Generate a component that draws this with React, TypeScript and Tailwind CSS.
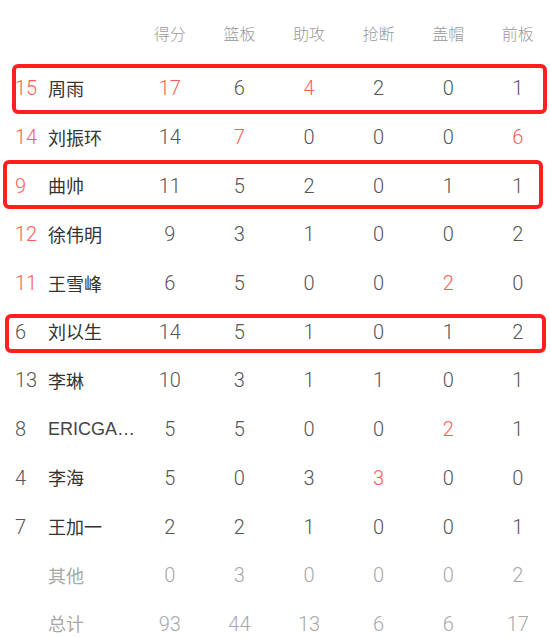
import React from "react";

type Row = { no: string; noRed?: boolean; name: string; vals: (number)[]; red?: number[]; muted?: boolean };

const rows: Row[] = [
  { no: "15", noRed: true, name: "周雨", vals: [17, 6, 4, 2, 0, 1], red: [0, 2] },
  { no: "14", noRed: true, name: "刘振环", vals: [14, 7, 0, 0, 0, 6], red: [1, 5] },
  { no: "9", noRed: true, name: "曲帅", vals: [11, 5, 2, 0, 1, 1] },
  { no: "12", noRed: true, name: "徐伟明", vals: [9, 3, 1, 0, 0, 2] },
  { no: "11", noRed: true, name: "王雪峰", vals: [6, 5, 0, 0, 2, 0], red: [4] },
  { no: "6", name: "刘以生", vals: [14, 5, 1, 0, 1, 2] },
  { no: "13", name: "李琳", vals: [10, 3, 1, 1, 0, 1] },
  { no: "8", name: "ERICGA…", vals: [5, 5, 0, 0, 2, 1], red: [4] },
  { no: "4", name: "李海", vals: [5, 0, 3, 3, 0, 0], red: [3] },
  { no: "7", name: "王加一", vals: [2, 2, 1, 0, 0, 1] },
  { no: "", name: "其他", vals: [0, 3, 0, 0, 0, 2], muted: true },
  { no: "", name: "总计", vals: [93, 44, 13, 6, 6, 17], muted: true },
];

const headers = ["得分", "篮板", "助攻", "抢断", "盖帽", "前板"];

const font = { fontFamily: '"Helvetica Neue", Roboto, "Noto Sans CJK SC", sans-serif' };

export default function App() {
  return (
    <div className="relative w-[550px] h-[637px] overflow-hidden bg-white" style={font}>
      <div className="grid grid-cols-[33px_87px_repeat(6,69.6px)] pl-[15px] h-[64px] items-center pt-[2px]">
        <div />
        <div />
        {headers.map((h) => (
          <div key={h} className="text-center text-[16px] text-[#9a9a9a] font-light" style={{ fontFamily: '"Noto Sans CJK SC", sans-serif' }}>
            {h}
          </div>
        ))}
      </div>
      {rows.map((r, i) => {
        const isLatin = r.name.startsWith("ERIC");
        return (
          <div key={i} className="grid grid-cols-[33px_87px_repeat(6,69.6px)] pl-[15px] h-[48.7px] items-center">
            <div className={`text-[20px] font-light ${r.noRed ? "text-[#ff5e55]" : "text-[#555555]"}`} style={{ fontFamily: 'Roboto, sans-serif' }}>
              {r.no}
            </div>
            <div
              className={`whitespace-nowrap ${isLatin ? "text-[18px] text-[#444444]" : "text-[18px]"} ${r.muted ? "text-[#a8a8a8]" : "text-[#333333]"}`}
              style={{ fontFamily: isLatin ? '"Liberation Sans", sans-serif' : '"Noto Sans CJK SC", sans-serif' }}
            >
              {r.name}
            </div>
            {r.vals.map((v, j) => (
              <div
                key={j}
                className={`text-center text-[20px] font-light ${
                  r.red?.includes(j) ? "text-[#ff5e55]" : r.muted ? "text-[#a8a8a8]" : "text-[#555555]"
                }`}
                style={{ fontFamily: 'Roboto, sans-serif' }}
              >
                {v}
              </div>
            ))}
          </div>
        );
      })}
      <div className="absolute left-[12px] top-[64px] w-[535px] h-[50px] border-[4px] border-[#ff1f1f] rounded-[6px]" />
      <div className="absolute left-[3px] top-[160px] w-[540px] h-[49px] border-[4px] border-[#ff1f1f] rounded-[6px]" />
      <div className="absolute left-[5px] top-[314px] w-[541px] h-[39px] border-[4px] border-[#ff1f1f] rounded-[6px]" />
    </div>
  );
}
